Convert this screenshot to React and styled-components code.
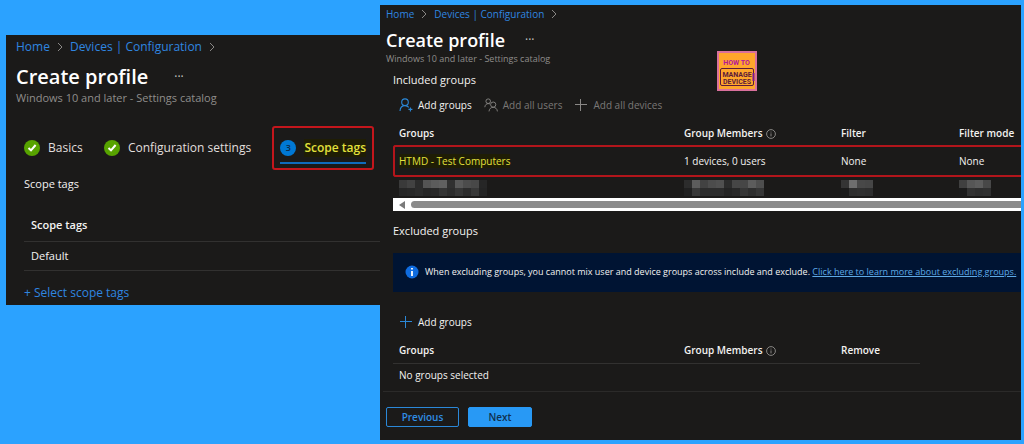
import React from 'react'
import styled, { createGlobalStyle } from 'styled-components'

const GlobalStyle = createGlobalStyle`
  * { box-sizing: border-box; }
  body {
    margin: 0;
    background: #2ba2ff;
    color: #f3f2f1;
    font-family: "Open Sans", "Noto Sans", sans-serif;
    font-size: 10px;
    line-height: 16px;
  }
  button { font-family: inherit; cursor: pointer; }
  a { color: #2f86e0; text-decoration: none; }
  svg { flex: none; }
`

const steps = [
  { name: 'Basics', done: true },
  { name: 'Configuration settings', done: true },
]

// grey levels of the redacted cells, top line and bottom line
const redacted = {
  name: [[58, 66, 44, 84, 92, 96, 48, 88, 76, 72, 38], [38, 40, 44, 38, 40, 52, 44, 54, 44, 56, 36]],
  members: [[44, 92, 66, 76, 80, 44, 70, 70, 92, 78], [32, 56, 44, 44, 44, 36, 40, 54, 46, 54]],
  filter: [[52, 110, 72, 70], [27, 46, 48, 46]],
  mode: [[64, 86, 92, 72], [27, 50, 46, 48]],
}

function Chevron() {
  return (
    <svg width="6" height="12" viewBox="0 0 6 12" fill="none" stroke="#8a8886" aria-hidden="true">
      <path d="M1 2L5 6L1 10" />
    </svg>
  )
}

function CheckIcon() {
  return (
    <svg width="16" height="16" viewBox="0 0 16 16" aria-hidden="true">
      <circle cx="8" cy="8" r="8" fill="#57a300" />
      <path d="M4.5 8L7 10.4L11.6 5" fill="none" stroke="#fff" strokeWidth="2" />
    </svg>
  )
}

function PersonAddIcon() {
  return (
    <svg width="14" height="14" viewBox="0 0 14 14" fill="none" stroke="#2b88d8" strokeWidth="1.1" aria-hidden="true">
      <circle cx="6" cy="4.2" r="3.3" />
      <path d="M1 13C1.2 9.6 3.4 7.6 6 7.6C7.8 7.6 9 8.4 9.8 9.4" />
      <path d="M11.4 9.4V13.4M9.4 11.4H13.4" />
    </svg>
  )
}

function PeopleIcon() {
  return (
    <svg width="14" height="14" viewBox="0 0 14 14" fill="none" stroke="#8a8886" strokeWidth=".9" aria-hidden="true">
      <circle cx="4.2" cy="3.2" r="2.3" />
      <path d="M.8 9.2C1 7 2.4 5.6 4.2 5.6C5 5.6 5.5 5.8 6 6.1" />
      <circle cx="9.2" cy="6.6" r="2.6" />
      <path d="M5 13.4C5.2 10.8 7 9.3 9.2 9.3C11.4 9.3 13.2 10.8 13.4 13.4" />
    </svg>
  )
}

function PlusIcon({ color }) {
  return (
    <svg width="14" height="14" viewBox="0 0 14 14" fill="none" stroke={color} aria-hidden="true">
      <path d="M6.5 1V13M1 6.5H13" />
    </svg>
  )
}

function InfoOutline() {
  return (
    <svg width="10" height="10" viewBox="0 0 10 10" fill="none" stroke="#a19f9d" strokeWidth=".8" aria-hidden="true">
      <circle cx="5" cy="5" r="4.4" />
      <path d="M5 4.4V7.4M5 2.6V3.5" />
    </svg>
  )
}

function InfoIcon() {
  return (
    <svg width="14" height="14" viewBox="0 0 14 14" aria-hidden="true">
      <circle cx="7" cy="7" r="6.5" fill="#0f6ce0" />
      <path d="M7 6V11M7 3V4.6" stroke="#fff" strokeWidth="1.8" />
    </svg>
  )
}

function Logo() {
  return (
    <svg width="40" height="40" viewBox="0 0 40 40" role="img" aria-label="How to manage devices">
      <rect width="40" height="40" fill="#d9709c" />
      <rect x="2" y="2" width="36" height="36" fill="#ffa62b" />
      <rect x="3.5" y="17.5" width="33" height="17" rx="1.5" fill="none" stroke="#5d1a3a" />
      <path d="M36.5 22V30" stroke="#7a1596" strokeWidth="2" />
      <g fontFamily="Roboto, sans-serif" fontWeight="700" textAnchor="middle">
        <text x="19.5" y="13.5" fontSize="7" fill="#b3179b">HOW TO</text>
        <text x="20" y="25.5" fontSize="7" fill="#5d1a3a">MANAGE</text>
        <text x="20" y="32.5" fontSize="7" fill="#5d1a3a">DEVICES</text>
      </g>
    </svg>
  )
}

function Pixels({ rows }) {
  return (
    <svg width={rows[0].length * 8} height="16" aria-label="Redacted" role="img">
      {rows.map((row, y) => row.map((v, x) => (
        <rect key={`${x}-${y}`} x={x * 8} y={y * 8} width="8" height="8" fill={`rgb(${v},${v},${v})`} />
      )))}
    </svg>
  )
}

function Header({ large }) {
  return (
    <header>
      <Crumbs $large={large} aria-label="Breadcrumb">
        <a href="#home">Home</a><Chevron />
        <a href="#configuration">Devices | Configuration</a><Chevron />
      </Crumbs>
      <TitleRow $large={large}>
        <Title $large={large}>Create profile</Title>
        <More type="button" aria-label="More">···</More>
      </TitleRow>
      <Subtitle $large={large}>Windows 10 and later - Settings catalog</Subtitle>
    </header>
  )
}

function ScopePanel() {
  return (
    <ScopeBox>
      <Header large />
      <Steps>
        {steps.map(step => (
          <Step key={step.name} type="button">{step.done && <CheckIcon />}{step.name}</Step>
        ))}
        <Highlight>
          <CurrentStep type="button"><StepNumber>3</StepNumber><Marked>Scope tags</Marked></CurrentStep>
        </Highlight>
      </Steps>
      <ScopeBody>
        <Label>Scope tags</Label>
        <ScopeTable>
          <thead><tr><th>Scope tags</th></tr></thead>
          <tbody><tr><td>Default</td></tr></tbody>
        </ScopeTable>
        <SelectLink href="#select">+ Select scope tags</SelectLink>
      </ScopeBody>
    </ScopeBox>
  )
}

function GroupsPanel() {
  return (
    <GroupsBox>
      <GroupsTop>
        <div>
          <Header />
          <IncludedTitle>Included groups</IncludedTitle>
        </div>
        <LogoSlot><Logo /></LogoSlot>
      </GroupsTop>
      <Section>
        <Toolbar>
          <Command type="button"><PersonAddIcon />Add groups</Command>
          <Command type="button" disabled><PeopleIcon />Add all users</Command>
          <Command type="button" disabled><PlusIcon color="#8a8886" />Add all devices</Command>
        </Toolbar>
        <IncludedTable>
          <colgroup><col /><Col $w={157} /><Col $w={118} /><Col $w={68} /></colgroup>
          <thead>
            <tr><th>Groups</th><th><WithIcon>Group Members <InfoOutline /></WithIcon></th><th>Filter</th><th>Filter mode</th></tr>
          </thead>
          <tbody>
            <MarkedRow>
              <td><Marked>HTMD - Test Computers</Marked></td><td>1 devices, 0 users</td><td>None</td><td>None</td>
            </MarkedRow>
            <PixelRow>
              <td><Pixels rows={redacted.name} /></td>
              <td><Pixels rows={redacted.members} /></td>
              <td><Pixels rows={redacted.filter} /></td>
              <td><Pixels rows={redacted.mode} /></td>
            </PixelRow>
          </tbody>
        </IncludedTable>
        <ScrollTrack>
          <svg width="6" height="8" viewBox="0 0 6 8" aria-hidden="true"><path d="M6 0V8L0 4Z" fill="#7a7a7a" /></svg>
          <ScrollThumb />
        </ScrollTrack>
        <ExcludedTitle>Excluded groups</ExcludedTitle>
        <Notice>
          <InfoIcon />
          <span>
            When excluding groups, you cannot mix user and device groups across include and exclude.{' '}
            <NoticeLink href="#learn">Click here to learn more about excluding groups.</NoticeLink>
          </span>
        </Notice>
        <ExcludedToolbar>
          <Command type="button"><PlusIcon color="#2b88d8" />Add groups</Command>
        </ExcludedToolbar>
        <ExcludedTable>
          <colgroup><col /><Col $w={157} /><Col $w={85} /></colgroup>
          <thead>
            <tr><th>Groups</th><th><WithIcon>Group Members <InfoOutline /></WithIcon></th><th>Remove</th></tr>
          </thead>
          <tbody><tr><td colSpan="3">No groups selected</td></tr></tbody>
        </ExcludedTable>
      </Section>
      <Footer>
        <PreviousButton type="button">Previous</PreviousButton>
        <NextButton type="button">Next</NextButton>
      </Footer>
    </GroupsBox>
  )
}

function App() {
  return (
    <>
      <GlobalStyle />
      <Page>
        <ScopePanel />
        <GroupsPanel />
      </Page>
    </>
  )
}

export default App

const Page = styled.main`
  display: grid;
  grid-template-columns: 374fr 641fr;
  align-items: start;
  padding: 5px 3px 4px 6px;
`
const Crumbs = styled.nav`
  display: flex;
  align-items: center;
  gap: 7px;
  font-size: ${props => props.$large ? '12px' : '10px'};
  line-height: 18px;
  white-space: nowrap;
`
const TitleRow = styled.div`
  display: flex;
  align-items: center;
  gap: ${props => props.$large ? '26px' : '20px'};
  margin-top: ${props => props.$large ? '8px' : '4px'};
`
const Title = styled.h1`
  margin: 0;
  font-size: ${props => props.$large ? '20px' : '18px'};
  font-weight: 600;
  line-height: 26px;
  color: #fff;
`
const More = styled.button`
  border: 0;
  padding: 0;
  background: none;
  color: #c8c6c4;
  font-size: 12px;
  line-height: 16px;
`
const Subtitle = styled.div`
  color: #8f8d8b;
  font-size: ${props => props.$large ? '11px' : '9px'};
  line-height: ${props => props.$large ? '16px' : '12px'};
`
const ScopeBox = styled.section`
  margin-top: 30px;
  padding: 3px 0 4px 10px;
  background: #1b1a19;
  font-size: 12px;
`
const Steps = styled.div`
  display: flex;
  align-items: center;
  justify-content: space-between;
  margin-top: 20px;
  padding: 0 6px 0 8px;
`
const Step = styled.button`
  display: flex;
  align-items: center;
  gap: 8px;
  border: 0;
  padding: 0;
  background: none;
  color: #e1dfdd;
  font-size: 12px;
  line-height: 18px;
  white-space: nowrap;
`
const Highlight = styled.div`
  border: 2px solid #c4161c;
  border-radius: 3px;
  padding: 11px 6px 4px;
`
const CurrentStep = styled(Step)`
  border-bottom: 2px solid #0f6cbd;
  padding-bottom: 5px;
  font-weight: 600;
`
const StepNumber = styled.span`
  width: 16px;
  border-radius: 50%;
  background: #0078d4;
  color: #0b2a4a;
  font-size: 9px;
  line-height: 16px;
  text-align: center;
`
const Marked = styled.span`
  background: #1f1d05;
  color: #e3e03c;
`
const ScopeBody = styled.div`
  padding-left: 8px;
`
const Label = styled.div`
  margin-top: 5px;
  line-height: 18px;
  font-size: 11px;
`
const ScopeTable = styled.table`
  width: 100%;
  margin: 15px 0 14px;
  border-collapse: collapse;
  th, td {
    padding: 5px 7px;
    border-bottom: 1px solid #323130;
    font-size: 11px;
    line-height: 18px;
    text-align: left;
  }
  th { font-weight: 600; padding: 8px 7px 7px; }
`
const SelectLink = styled.a`
  display: block;
`
const GroupsBox = styled.section`
  min-width: 0;
  padding-bottom: 13px;
  background: #1b1a19;
`
const GroupsTop = styled.div`
  display: grid;
  grid-template-columns: 331fr 304fr;
  padding-left: 6px;
`
const LogoSlot = styled.div`
  padding-top: 46px;
  svg { display: block; }
`
const Section = styled.div`
  padding-left: 13px;
`
const SectionTitle = styled.h2`
  margin: 0;
  font-size: 11px;
  font-weight: 400;
  line-height: 16px;
`
const IncludedTitle = styled(SectionTitle)`
  margin: 7px 0 0 7px;
`
const Toolbar = styled.div`
  display: flex;
  gap: 12px;
  padding: 6px 6px 9px;
`
const Command = styled.button`
  display: flex;
  align-items: center;
  gap: 5px;
  border: 0;
  padding: 0;
  background: none;
  color: #f3f2f1;
  font-size: 10px;
  line-height: 16px;
  &:disabled { color: #7a7876; }
`
const Col = styled.col`
  width: ${props => props.$w}px;
`
const IncludedTable = styled.table`
  width: 100%;
  table-layout: fixed;
  border-collapse: collapse;
  th, td {
    padding: 0 0 0 6px;
    text-align: left;
    white-space: nowrap;
  }
  th { font-weight: 600; line-height: 23px; }
`
const MarkedRow = styled.tr`
  height: 32px;
  td { box-shadow: inset 0 2px #b3151b, inset 0 -2px #b3151b; }
  td:first-child {
    border-radius: 3px 0 0 3px;
    box-shadow: inset 2px 0 #b3151b, inset 0 2px #b3151b, inset 0 -2px #b3151b;
  }
`
const PixelRow = styled.tr`
  svg { display: block; margin: 3px 0 2px; }
`
const WithIcon = styled.span`
  display: flex;
  align-items: center;
  gap: 3px;
`
const ScrollTrack = styled.div`
  display: flex;
  align-items: center;
  gap: 6px;
  height: 13px;
  padding-left: 6px;
  background: #fff;
`
const ScrollThumb = styled.div`
  flex: 1;
  height: 7px;
  border-radius: 4px 0 0 4px;
  background: #8b8b8b;
`
const ExcludedTitle = styled(SectionTitle)`
  margin: 12px 0 14px;
`
const Notice = styled.div`
  display: flex;
  align-items: center;
  gap: 6px;
  padding: 11px 0 12px 12px;
  background: #001433;
  font-size: 9px;
  white-space: nowrap;
`
const NoticeLink = styled.a`
  color: #5ea9e6;
  text-decoration: underline;
`
const ExcludedToolbar = styled(Toolbar)`
  padding: 22px 6px 8px;
`
const ExcludedTable = styled.table`
  width: calc(100% - 101px);
  table-layout: fixed;
  border-collapse: collapse;
  th, td {
    padding: 0 0 0 6px;
    text-align: left;
  }
  th { border-bottom: 1px solid #323130; font-weight: 600; line-height: 25px; }
  td { padding-bottom: 5px; line-height: 22px; }
`
const Footer = styled.footer`
  display: flex;
  gap: 9px;
  border-top: 1px solid #2b2a29;
  margin-left: 3px;
  padding: 15px 0 0 3px;
`
const PreviousButton = styled.button`
  width: 73px;
  height: 20px;
  border: 1px solid #2b88d8;
  border-radius: 2px;
  padding: 0;
  background: none;
  color: #2f8de4;
  font-size: 10px;
  font-weight: 600;
`
const NextButton = styled(PreviousButton)`
  width: 64px;
  border-color: #2899f5;
  background: #2899f5;
  color: #10304f;
`
